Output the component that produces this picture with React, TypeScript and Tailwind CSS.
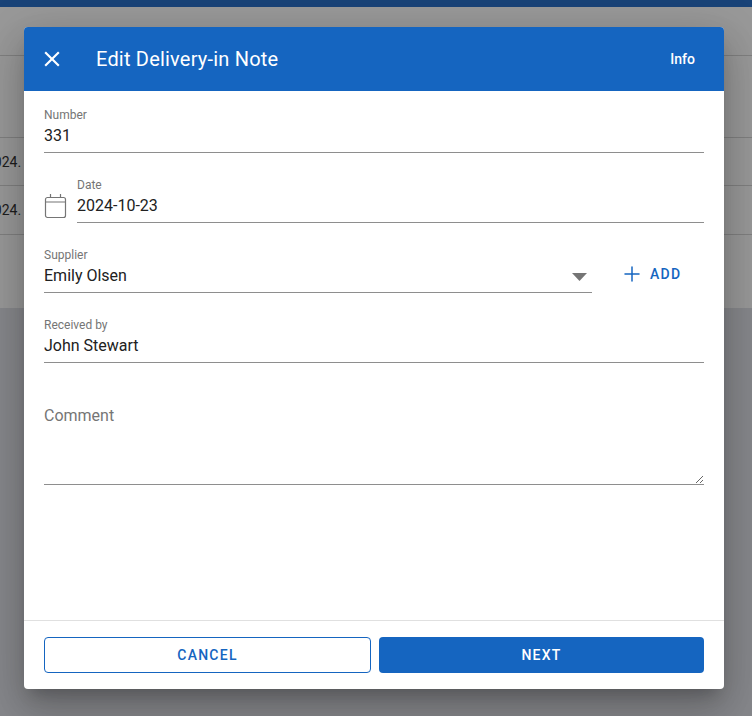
import { Plus } from 'lucide-react'

function CloseIcon() {
  return (
    <svg viewBox="0 0 24 24" fill="currentColor" className="w-[26px] h-[26px] flex-none">
      <path d="M19 6.41 17.59 5 12 10.59 6.41 5 5 6.41 10.59 12 5 17.59 6.41 19 12 13.41 17.59 19 19 17.59 13.41 12z" />
    </svg>
  )
}

function CalendarIcon() {
  return (
    <svg viewBox="0 0 24 26" fill="none" stroke="#757575" strokeWidth={1.2} className="w-6 h-[26px] flex-none">
      <rect x="1.5" y="4.5" width="20" height="20" rx="2" />
      <line x1="1.5" y1="9" x2="21.5" y2="9" />
      <line x1="6.5" y1="1" x2="6.5" y2="4.5" />
      <line x1="16.5" y1="1" x2="16.5" y2="4.5" />
    </svg>
  )
}

function Caret() {
  return (
    <svg viewBox="0 0 15 8" fill="#757575" className="absolute right-[5px] top-[25px] w-[15px] h-2">
      <path d="M0 0h15L7.5 8z" />
    </svg>
  )
}

function Field({ label, value }: { label: string; value: string }) {
  return (
    <label className="block w-full">
      <span className="block h-[14px] text-xs leading-[14px] text-[#757575]">{label}</span>
      <input
        readOnly
        value={value}
        className="block w-full h-[31px] pb-[3px] border-b border-[#8e8e8e] bg-transparent text-base text-[#212121] outline-none"
      />
    </label>
  )
}

export default function App() {
  return (
    <div className="relative w-[752px] h-[716px] overflow-hidden bg-[#e2e3e9] font-['Roboto',sans-serif]">
      {/* page behind the dialog */}
      <div className="h-[7px] bg-[#2b70c8]" />
      <div className="h-[301px] bg-white">
        <div className="h-[49px] border-b border-[#d5d5d5]" />
        <div className="h-[82px] border-b border-[#d5d5d5]" />
        <div className="h-[48px] flex items-center border-b border-[#d5d5d5] text-sm text-[#333333]">
          <span className="-ml-[14px]">2024.</span>
        </div>
        <div className="h-[49px] flex items-center border-b border-[#d5d5d5] text-sm text-[#333333]">
          <span className="-ml-[14px]">2024.</span>
        </div>
      </div>

      <div className="absolute inset-0 bg-black/40" />

      {/* dialog */}
      <div className="absolute left-6 top-[27px] w-[700px] h-[662px] flex flex-col bg-white rounded overflow-hidden shadow-[0_11px_15px_-7px_rgba(0,0,0,0.2),0_24px_38px_3px_rgba(0,0,0,0.14),0_9px_46px_8px_rgba(0,0,0,0.12)]">
        <header className="h-16 flex-none flex items-center pl-[15px] pr-[29px] bg-[#1565c0] text-white">
          <CloseIcon />
          <h2 className="ml-[31px] flex-1 text-xl tracking-[0.2px]">Edit Delivery-in Note</h2>
          <button className="text-sm font-medium">Info</button>
        </header>

        <div className="flex-1 flex flex-col gap-[25px] pt-[17px] px-5">
          <Field label="Number" value="331" />
          <div className="flex items-end gap-[9px]">
            <div className="pb-[4px]">
              <CalendarIcon />
            </div>
            <Field label="Date" value="2024-10-23" />
          </div>
          <div className="flex items-end">
            <div className="relative w-[548px] flex-none">
              <Field label="Supplier" value="Emily Olsen" />
              <Caret />
            </div>
            <button className="ml-[27px] mb-[7px] flex items-center gap-[6px] pl-px text-sm font-medium tracking-[1.25px] text-[#1565c0]">
              <Plus size={24} strokeWidth={1.5} />
              ADD
            </button>
          </div>
          <Field label="Received by" value="John Stewart" />
          <textarea
            readOnly
            placeholder="Comment"
            className="block w-full h-[81px] mt-[16px] flex-none border-b border-[#8e8e8e] text-base text-[#212121] placeholder:text-[#757575] placeholder:opacity-100 outline-none"
          />
        </div>

        <footer className="h-[69px] flex-none flex gap-2 px-5 pt-4 border-t border-[#e0e0e0]">
          <button className="w-[327px] h-9 rounded border border-[#1565c0] text-sm font-medium tracking-[1.25px] text-[#1565c0]">
            CANCEL
          </button>
          <button className="flex-1 h-9 rounded bg-[#1565c0] text-sm font-medium tracking-[1.25px] text-white">
            NEXT
          </button>
        </footer>
      </div>
    </div>
  )
}
